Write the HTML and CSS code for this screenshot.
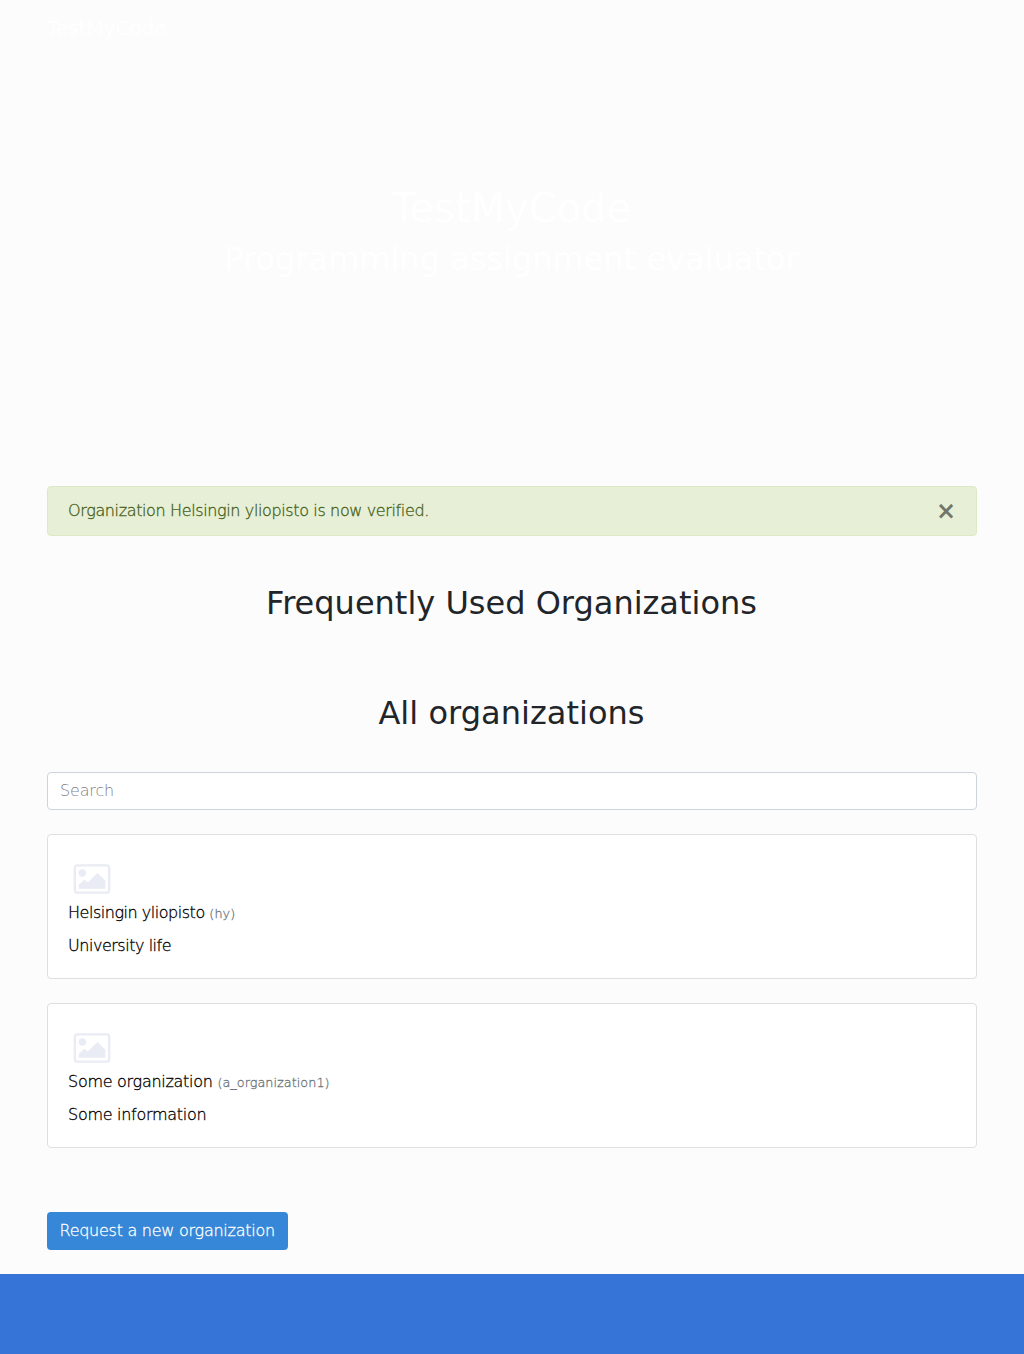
FILE: index.html
```
<!DOCTYPE html>
<html lang="en">
<head>
<meta charset="utf-8">
<title>TestMyCode</title>
<link rel="stylesheet" href="styles.css">
</head>
<body>
<svg class="sprite" aria-hidden="true">
  <symbol id="image-icon" viewBox="0 0 38 30">
    <rect x="1.8" y="1.3" width="34.4" height="27.4" rx="2.5" fill="none" stroke="currentColor" stroke-width="2.3"/>
    <circle cx="9.3" cy="9" r="3.7" fill="currentColor"/>
    <path d="M5.8 24.700v-4l5.500-5 3.500 2.800 9.700-9.500 7.800 7.500v8.200z" fill="currentColor"/>
  </symbol>
</svg>
<nav class="container navbar"><a class="brand" href="#">TestMyCode</a></nav>
<header class="hero">
  <h1>TestMyCode</h1>
  <h2>Programming assignment evaluator</h2>
</header>
<main class="container">
  <div class="alert"><span>Organization Helsingin yliopisto is now verified.</span><button class="close" aria-label="Close">×</button></div>
  <h2 class="section-title">Frequently Used Organizations</h2>
  <h2 class="section-title all-title">All organizations</h2>
  <input class="search" type="text" placeholder="Search">
  <article class="card card-narrow">
    <svg class="logo"><use href="#image-icon"/></svg>
    <div class="name">Helsingin yliopisto <small>(hy)</small></div>
    <p>University life</p>
  </article>
  <article class="card">
    <svg class="logo"><use href="#image-icon"/></svg>
    <div class="name">Some organization <small>(a_organization1)</small></div>
    <p>Some information</p>
  </article>
  <a class="button" href="#">Request a new organization</a>
</main>
<footer></footer>
</body>
</html>
```
FILE: styles.css
```
* { box-sizing: border-box; }
body {
  margin: 0;
  background: #fcfcfc;
  color: #212529;
  font: 200 16px/24px "DejaVu Sans", sans-serif;
}
h1, h2, p { margin: 0; }
h1, h2 { font-weight: 400; line-height: 1.2; }
h1 { font-size: 40px; }
h2 { font-size: 32px; }
a { text-decoration: none; }
.sprite { display: none; }
.container { width: 960px; margin: 0 auto; padding: 0 15px; }
.navbar { height: 56px; display: flex; align-items: center; }
.brand { color: #fff; font-size: 20px; font-weight: 400; line-height: 30px; -webkit-text-stroke: .3px #fff; }
.hero { height: 430px; padding-top: 128px; color: #fff; text-align: center; }
.hero h1 { margin-bottom: 8px; padding-right: 1px; }
.hero h2 { padding-right: 1px; line-height: 38px; }
.alert {
  height: 50px;
  padding: 0 20px;
  display: flex;
  align-items: center;
  justify-content: space-between;
  background: #e7efd7;
  border: 1px solid #dde9c5;
  border-radius: 4px;
  color: #456016;
  letter-spacing: -.37px;
}
.alert span, .card, .button { -webkit-text-stroke: .3px currentColor; }
.close {
  padding: 0;
  border: 0;
  background: none;
  color: #000;
  font: 700 24px/24px "DejaVu Sans", sans-serif;
  opacity: .5;
}
.section-title { margin-top: 48px; padding-right: 1px; line-height: 38px; text-align: center; }
.all-title { margin-top: 72px; letter-spacing: .04px; }
.search {
  display: block;
  width: 100%;
  height: 38px;
  margin: 40px 0 24px;
  padding: 5px 12px 7px;
  border: 1px solid #ced4da;
  border-radius: 4px;
  background: #fff;
  font: inherit;
  letter-spacing: -.15px;
}
.search::placeholder { color: #808080; opacity: 1; }
.card {
  height: 145px;
  margin-bottom: 24px;
  padding: 29px 20px 0;
  border: 1px solid #dfdfdf;
  border-radius: 4px;
  background: #fff;
  color: #000;
  letter-spacing: -.28px;
}
.card-narrow { letter-spacing: -.47px; }
.logo { display: block; width: 38px; height: 30px; margin: 0 0 7px 5px; color: #e9ecf4; }
.name { height: 24px; margin-bottom: 9px; }
small { color: #6c757d; font-size: 12.8px; letter-spacing: .04px; }
.button {
  display: inline-block;
  width: 241px;
  height: 38px;
  margin: 40px 0 24px;
  padding: 7px 12px 7px 12.5px;
  border-radius: 4px;
  background: #3687d7;
  color: #fff;
  letter-spacing: -.26px;
  white-space: nowrap;
}
main { height: 788px; }
footer { height: 80px; background: #3674d7; }
```
